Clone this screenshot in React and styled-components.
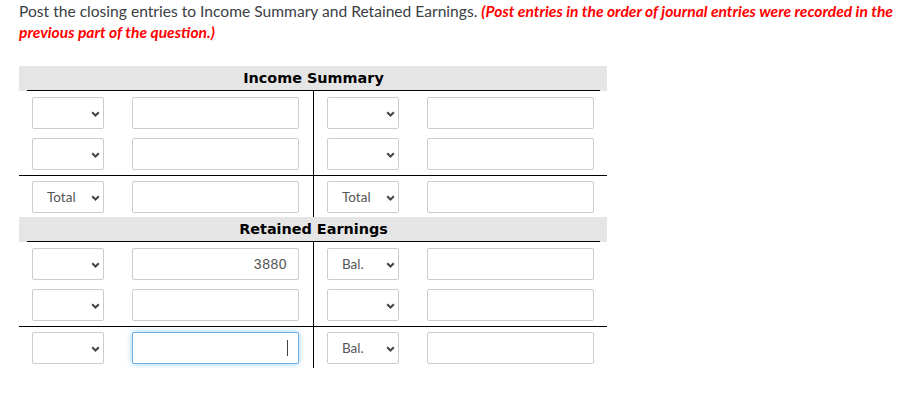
import React from 'react';
import styled, { createGlobalStyle } from 'styled-components';

const GlobalStyle = createGlobalStyle`
  body {
    margin: 0;
    background: #fff;
    font-family: Lato, "Open Sans", sans-serif;
  }
`;

const sections = [
  {
    title: 'Income Summary',
    rows: [
      { left: { sel: '', val: '' }, right: { sel: '', val: '' } },
      { left: { sel: '', val: '' }, right: { sel: '', val: '' } },
    ],
    total: { left: { sel: 'Total', val: '' }, right: { sel: 'Total', val: '' } },
  },
  {
    title: 'Retained Earnings',
    rows: [
      { left: { sel: '', val: '3880' }, right: { sel: 'Bal.', val: '' } },
      { left: { sel: '', val: '' }, right: { sel: '', val: '' } },
    ],
    total: { left: { sel: '', val: '', focused: true }, right: { sel: 'Bal.', val: '' } },
  },
];

function Chevron() {
  return (
    <ChevronSvg viewBox="0 0 9 6" width="9" height="6">
      <path d="M1.2 1.2 L4.5 4.5 L7.8 1.2" fill="none" stroke="#444" strokeWidth="2" />
    </ChevronSvg>
  );
}

function Entry({ sel, val, focused }) {
  return (
    <Row>
      <Select>
        <span>{sel}</span>
        <Chevron />
      </Select>
      <InputWrap>
        <Input defaultValue={val} focused={focused} readOnly />
        {focused && <Caret />}
      </InputWrap>
    </Row>
  );
}

function Side({ data, which, total }) {
  return (
    <Column left={which === 'left'}>
      <Rows>
        {data.map((r, i) => (
          <Entry key={i} {...r[which]} />
        ))}
      </Rows>
      <TotalRow>
        <Entry {...total[which]} />
      </TotalRow>
    </Column>
  );
}

function App() {
  return (
    <Page>
      <GlobalStyle />
      <Prompt>
        Post the closing entries to Income Summary and Retained Earnings.{' '}
        <Note>(Post entries in the order of journal entries were recorded in the previous part of the question.)</Note>
      </Prompt>
      <Ledger>
        {sections.map((s) => (
          <div key={s.title}>
            <Header>
              <HeaderTitle>{s.title}</HeaderTitle>
            </Header>
            <Body>
              <Side data={s.rows} which="left" total={s.total} />
              <Side data={s.rows} which="right" total={s.total} />
            </Body>
          </div>
        ))}
      </Ledger>
    </Page>
  );
}

export default App;

const Page = styled.div`
  padding: 1px 0 0 19px;
`;

const Prompt = styled.p`
  margin: 0;
  width: 880px;
  font-size: 15.6px;
  line-height: 21px;
  color: #3b4045;
`;

const Note = styled.span`
  color: #f00;
  font-weight: 700;
  font-style: italic;
`;

const Ledger = styled.div`
  width: 588px;
  margin-top: 23px;
`;

const Header = styled.div`
  background: #e5e5e5;
  height: 25px;
  padding: 0 7px 0 8px;
  box-sizing: border-box;
`;

const HeaderTitle = styled.div`
  height: 25px;
  box-sizing: border-box;
  border-bottom: 1px solid #000;
  text-align: center;
  font-family: "DejaVu Sans", Verdana, sans-serif;
  font-weight: 700;
  font-size: 14.4px;
  line-height: 25px;
  color: #000;
`;

const Body = styled.div`
  display: grid;
  grid-template-columns: 295px 293px;
`;

const Column = styled.div`
  box-sizing: border-box;
  border-right: ${(p) => (p.left ? '1px solid #000' : 'none')};
  padding-bottom: 4px;
`;

const Rows = styled.div`
  display: flex;
  flex-direction: column;
  gap: 9px;
  padding: 6px 0 5px;
`;

const TotalRow = styled.div`
  border-top: 1px solid #000;
  padding-top: 5px;
`;

const Row = styled.div`
  display: grid;
  grid-template-columns: 72px 167px;
  column-gap: 28px;
  padding-left: 13px;
  height: 32px;
`;

const Select = styled.div`
  box-sizing: border-box;
  height: 32px;
  border: 1px solid #ccc;
  border-radius: 2px;
  background: #fff;
  display: flex;
  align-items: center;
  justify-content: space-between;
  padding: 0 3px 0 14px;
  font-family: Lato, sans-serif;
  font-size: 13.5px;
  color: #555;
`;

const ChevronSvg = styled.svg`
  display: block;
  margin-top: 1px;
`;

const InputWrap = styled.div`
  position: relative;
`;

const Input = styled.input`
  box-sizing: border-box;
  width: 100%;
  height: 32px;
  margin: 0;
  border: 1px solid ${(p) => (p.focused ? '#66afe9' : '#ccc')};
  border-radius: 2px;
  box-shadow: ${(p) => (p.focused ? '0 0 6px rgba(102,175,233,0.6)' : 'none')};
  outline: none;
  padding: 0 11px 0 6px;
  text-align: right;
  font-family: "Liberation Sans", Arial, sans-serif;
  font-size: 14px;
  letter-spacing: 0.5px;
  color: #555;
  background: #fff;
`;

const Caret = styled.span`
  position: absolute;
  right: 11px;
  top: 8px;
  width: 1px;
  height: 16px;
  background: #444;
`;
